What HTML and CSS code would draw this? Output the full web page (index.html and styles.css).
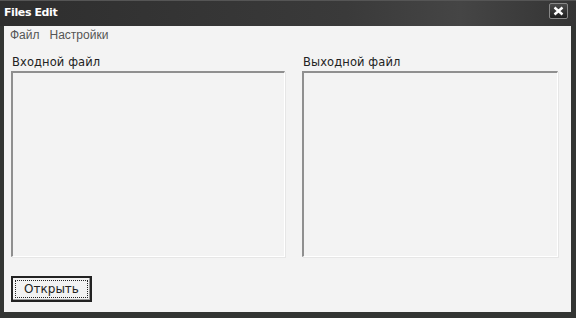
FILE: index.html
```html
<!DOCTYPE html>
<html lang="ru">
<head>
    <meta charset="UTF-8">
    <title>Files Edit</title>
    <link rel="stylesheet" href="styles.css">
</head>
<body>

    <div class="window">
        <div class="titlebar">
            <span class="title">Files Edit</span>
            <div class="closebtn">
                <svg width="11" height="10" viewBox="0 0 11 10">
                    <path d="M1.5 1.5 L9.5 8.5 M9.5 1.5 L1.5 8.5" stroke="#fff" stroke-width="2.4"/>
                </svg>
            </div>
        </div>

        <div class="client">
            <div class="menubar">
                <span class="menuitem">Файл</span>
                <span class="menuitem">Настройки</span>
            </div>

            <div class="panels">
                <div class="panel">
                    <div class="label">Входной файл</div>
                    <div class="listbox"></div>
                </div>
                <div class="panel right">
                    <div class="label">Выходной файл</div>
                    <div class="listbox"></div>
                </div>
            </div>

            <div class="footer">
                <button class="openbtn"><span class="focus">Открыть</span></button>
            </div>
        </div>
    </div>

</body>
</html>
```

FILE: styles.css
```css
html, body{
    margin: 0;
    height: 100%;
}

body{
    font-family: "DejaVu Sans", "Liberation Sans", sans-serif;
    font-size: 11px;
    background: #2b2b2b;
}

.window{
    width: 576px;
    height: 318px;
    box-sizing: border-box;
    display: flex;
    flex-direction: column;
    background: #333533;
    padding: 0 5px 6px 4px;
}

.titlebar{
    height: 26px;
    display: flex;
    align-items: center;
    justify-content: space-between;
    margin: 0 -5px 0 -4px;
    padding: 0 8px 2px 4px;
    background: linear-gradient(to right, #2e2e2e, #3a3a3a 60%, #454545 80%, #343434);
    border-top: 1px solid #555;
    box-sizing: border-box;
}

.title{
    color: #fff;
    font-family: "DejaVu Sans", sans-serif;
    font-weight: bold;
    font-size: 11px;
    letter-spacing: -0.4px;
}

.closebtn{
    width: 19px;
    height: 16px;
    box-sizing: border-box;
    border: 1px solid #888;
    border-radius: 2px;
    background: linear-gradient(#4a4a4a, #202020);
    display: flex;
    align-items: center;
    justify-content: center;
    margin-top: -3px;
}

.client{
    flex: 1;
    background: #f3f3f3;
    display: flex;
    flex-direction: column;
    color: #333;
}

.menubar{
    height: 18px;
    display: flex;
    align-items: center;
    padding: 0 0 0 6px;
    color: #555;
    font-family: "Liberation Sans", sans-serif;
    font-size: 12px;
}

.menuitem{
    margin-right: 10px;
}

.panels{
    display: flex;
    padding: 11px 0 0 7px;
}

.panel{
    width: 274px;
    display: flex;
    flex-direction: column;
}

.panel.right{
    margin-left: 17px;
    width: 256px;
}

.label{
    padding-left: 1px;
    height: 16px;
    color: #222;
    font-size: 11.5px;
    letter-spacing: 0.1px;
}

.listbox{
    height: 186px;
    box-sizing: border-box;
    border-top: 2px solid #8f8f8f;
    border-left: 2px solid #8f8f8f;
    border-right: 1px solid #fff;
    border-bottom: 1px solid #fff;
    background: #f3f3f3;
    box-shadow: 1px 1px 0 #e6e6e6;
}

.footer{
    padding: 19px 0 0 7px;
}

.openbtn{
    width: 81px;
    height: 26px;
    border: 2px solid #222;
    background: #f2f2f2;
    padding: 2px;
    font-family: "DejaVu Sans", sans-serif;
    font-size: 12px;
    color: #222;
    display: flex;
    box-shadow: inset -1px -1px 0 #999;
}

.focus{
    flex: 1;
    border: 1px dotted #222;
    display: flex;
    align-items: center;
    justify-content: center;
}
```
